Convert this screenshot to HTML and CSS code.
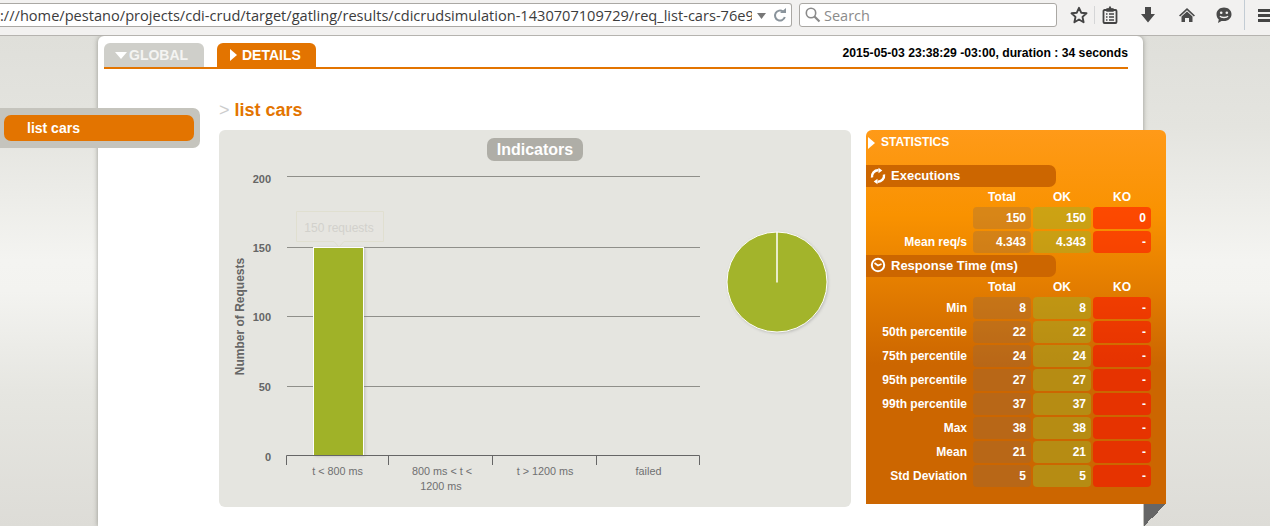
FILE: index.html
```html
<!DOCTYPE html>
<html lang="en">
<head>
<meta charset="utf-8">
<title>Gatling report - list cars</title>
<link rel="stylesheet" href="styles.css">
</head>
<body>
<header class="toolbar">
  <div class="urlbar">
    <span class="url">:///home/pestano/projects/cdi-crud/target/gatling/results/cdicrudsimulation-1430707109729/req_list-cars-76e9</span>
    <svg class="url-icons" width="32" height="16" viewBox="0 0 32 16"><path d="M1 6h9l-4.500 6z" fill="#777"/><path d="M27 4.500a5 5 0 1 0 1.800 5.500" fill="none" stroke="#8a949c" stroke-width="2"/><path d="M24 6h6V1z" fill="#8a949c"/></svg>
  </div>
  <div class="searchbar">
    <svg width="18" height="18" viewBox="0 0 18 18"><circle cx="7" cy="7" r="4.700" fill="none" stroke="#8a8a8a" stroke-width="1.600"/><path d="M10.500 10.500l5 5" stroke="#8a8a8a" stroke-width="2.200"/></svg>
    <span>Search</span>
  </div>
  <div class="tools">
    <svg class="t-star" width="18" height="18" viewBox="0 0 18 18"><path d="M9 1.800l2.200 4.900 5.300.6-4 3.600 1.100 5.300L9 13.500l-4.600 2.700 1.100-5.300-4-3.600 5.300-.6z" fill="none" stroke="#444" stroke-width="1.900" stroke-linejoin="round"/></svg>
    <i class="t-sep"></i>
    <svg class="t-clip" width="16" height="18" viewBox="0 0 16 18"><path d="M2.500 4h11a1 1 0 0 1 1 1v11a1 1 0 0 1-1 1h-11a1 1 0 0 1-1-1V5a1 1 0 0 1 1-1z" fill="none" stroke="#444" stroke-width="1.800"/><path d="M5 4V2.800h2L8 1l1 1.800h2V5H5zM4 8h1.500M7 8h5M4 11h1.500M7 11h5M4 14h1.500M7 14h5" fill="#444" stroke="#444" stroke-width="1.300"/></svg>
    <svg class="t-down" width="16" height="18" viewBox="0 0 16 18"><path d="M5 1h6v7h4l-7 8.500L1 8h4z" fill="#4a4a4a"/></svg>
    <svg class="t-home" width="18" height="18" viewBox="0 0 18 18"><path d="M9 2L1 9.500l1.200 1L9 4.300l6.800 6.200 1.200-1z" fill="#4a4a4a"/><path d="M9 5.500L3.500 10.500V16H7v-4h4v4h3.500v-5.500z" fill="#4a4a4a"/></svg>
    <svg class="t-chat" width="18" height="18" viewBox="0 0 18 18"><path d="M9 1.500c4.300 0 7.500 2.900 7.500 6.700S13.300 15 9 15H6.500L3 17l.8-3.400C2.300 12.300 1.500 10.400 1.500 8.200 1.500 4.400 4.700 1.500 9 1.500z" fill="#4a4a4a"/><circle cx="6.200" cy="6.700" r="1.300" fill="#f2f1f0"/><circle cx="11.800" cy="6.700" r="1.300" fill="#f2f1f0"/><path d="M5 10c1 2 7 2 8 0" fill="none" stroke="#f2f1f0" stroke-width="1.300"/></svg>
    <i class="t-sep t-sep-tall"></i>
    <div class="t-menu"><b></b><b></b><b></b></div>
  </div>
</header>

<div class="page">
  <nav class="sidebar"><a class="side-item">list cars</a></nav>
  <main class="sheet">
    <div class="tabbar">
      <a class="tab tab-global"><i class="arrow-down"></i>GLOBAL</a>
      <a class="tab tab-details"><i class="arrow-right"></i>DETAILS</a>
      <span class="runinfo">2015-05-03 23:38:29 -03:00, duration : 34 seconds</span>
    </div>
    <h1 class="title"><span class="title-gt">&gt;</span> list cars</h1>
    <div class="content">
      <section class="chart-panel">
        <h2 class="chart-title">Indicators</h2>
        <svg class="chart" width="632" height="377" viewBox="0 0 632 377">
          <defs>
            <filter id="soft" x="-20%" y="-20%" width="140%" height="140%"><feGaussianBlur stdDeviation="1.500"/></filter>
          </defs>
          <g class="grid">
            <path d="M68 46.500H481M68 117.500H481M68 186.500H481M68 256.500H481"/>
          </g>
          <g class="ylabels">
            <text x="52" y="53">200</text>
            <text x="52" y="122">150</text>
            <text x="52" y="191">100</text>
            <text x="52" y="261">50</text>
            <text x="52" y="331">0</text>
          </g>
          <text class="ytitle" transform="translate(25 186.500) rotate(-90)">Number of Requests</text>
          <rect x="96" y="118" width="50" height="208" fill="#888" opacity=".45" filter="url(#soft)"/>
          <rect x="94.500" y="117.500" width="50" height="208" fill="#a0b228" stroke="#fff"/>
          <path class="axis" d="M67.500 335V325.500H480.500V335M169.500 326V335M273.500 326V335M377.500 326V335"/>
          <g class="xlabels">
            <text x="118.500" y="345">t &lt; 800 ms</text>
            <text x="223" y="345">800 ms &lt; t &lt;</text>
            <text x="222" y="360">1200 ms</text>
            <text x="326" y="345">t &gt; 1200 ms</text>
            <text x="429.500" y="345">failed</text>
          </g>
          <g class="tooltip">
            <path d="M77.500 81.500H164.500V111.500H125L120 117 115 111.500H77.500z"/>
            <text x="120" y="102">150 requests</text>
          </g>
          <circle cx="559" cy="153" r="50" fill="#888" opacity=".5" filter="url(#soft)"/>
          <circle cx="558" cy="152" r="50" fill="#a3b42b" stroke="#fff"/>
          <path d="M558 102V152.500" stroke="#fff" stroke-width="1.500"/>
        </svg>
      </section>

      <section class="stats">
        <h2 class="stats-title"><i class="arrow-right arrow-stats"></i>STATISTICS</h2>
        <h3 class="stats-band">
          <svg width="18" height="18" viewBox="0 0 18 18"><path d="M3 10.500A6.200 6.200 0 0 1 9.500 3.300M15 7.500A6.200 6.200 0 0 1 8.500 14.700" fill="none" stroke="#fff" stroke-width="2.400"/><path d="M9.500 0.800l3.800 2.700-3.800 2.700zM8.500 17.200l-3.800-2.700 3.800-2.700z" fill="#fff"/></svg>
          Executions
        </h3>
        <div class="stats-grid">
          <span></span><span class="col">Total</span><span class="col">OK</span><span class="col">KO</span>
          <span></span><span class="c total">150</span><span class="c ok">150</span><span class="c ko">0</span>
          <span class="lbl">Mean req/s</span><span class="c total">4.343</span><span class="c ok">4.343</span><span class="c ko">-</span>
        </div>
        <h3 class="stats-band">
          <svg width="18" height="18" viewBox="0 0 18 18"><circle cx="9" cy="8" r="6.200" fill="none" stroke="#fff" stroke-width="2"/><path d="M5.500 6L9 8.500l3.500-1.500" fill="none" stroke="#fff" stroke-width="1.600"/></svg>
          Response Time (ms)
        </h3>
        <div class="stats-grid">
          <span></span><span class="col">Total</span><span class="col">OK</span><span class="col">KO</span>
          <span class="lbl">Min</span><span class="c total">8</span><span class="c ok">8</span><span class="c ko">-</span>
          <span class="lbl">50th percentile</span><span class="c total">22</span><span class="c ok">22</span><span class="c ko">-</span>
          <span class="lbl">75th percentile</span><span class="c total">24</span><span class="c ok">24</span><span class="c ko">-</span>
          <span class="lbl">95th percentile</span><span class="c total">27</span><span class="c ok">27</span><span class="c ko">-</span>
          <span class="lbl">99th percentile</span><span class="c total">37</span><span class="c ok">37</span><span class="c ko">-</span>
          <span class="lbl">Max</span><span class="c total">38</span><span class="c ok">38</span><span class="c ko">-</span>
          <span class="lbl">Mean</span><span class="c total">21</span><span class="c ok">21</span><span class="c ko">-</span>
          <span class="lbl">Std Deviation</span><span class="c total">5</span><span class="c ok">5</span><span class="c ko">-</span>
        </div>
        <i class="fold"></i>
      </section>
    </div>
  </main>
</div>
</body>
</html>
```
FILE: styles.css
```css
* { box-sizing: border-box; }
html, body { margin: 0; height: 526px; overflow: hidden; }
body { font-family: "Liberation Sans", Arial, sans-serif; background: #e4e4e0; }

/* Browser chrome */
.toolbar { position: relative; z-index: 2; height: 36px; display: flex; align-items: flex-start; padding-top: 3px; background: #f2f1f0; border-bottom: 1px solid #b5b3af; }
.urlbar { flex: none; width: 792px; height: 24px; display: flex; align-items: center; background: #fff; border: 1px solid #aaa8a4; border-left: 0; border-radius: 0 3px 3px 0; overflow: hidden; }
.url { flex: 1; min-width: 0; white-space: nowrap; overflow: hidden; font: 14.600px "Open Sans", sans-serif; color: #3c3c3c; }
.url-icons { flex: none; margin: 0 3px 0 4px; }
.searchbar { flex: none; width: 258px; height: 24px; margin-left: 7px; display: flex; align-items: center; gap: 2px; padding-left: 4px; background: #fff; border: 1px solid #aaa8a4; border-radius: 3px; font: 14.500px "Open Sans", sans-serif; color: #8b8b8b; }
.tools { flex: 1; display: flex; align-items: center; height: 24px; padding-left: 13px; }
.t-star { flex: none; margin-right: 6px; }
.t-sep { flex: none; width: 1px; height: 18px; background: #d5d6d7; }
.t-clip { flex: none; margin-left: 7px; }
.t-down { flex: none; margin-left: 22px; }
.t-home { flex: none; margin-left: 22px; }
.t-chat { flex: none; margin-left: 19px; }
.t-sep-tall { height: 30px; margin-left: 11px; background: #c3ccd4; }
.t-menu { flex: 1; margin-left: 13px; display: flex; flex-direction: column; gap: 2px; }
.t-menu b { display: block; height: 3px; background: #444; }

/* Page */
.page { position: relative; height: 490px; padding-left: 98px; background: linear-gradient(#dfdfda 0, #e4e4df 90px, #f4f4f1 225px, #f3f3f0 255px, #e6e6e1 355px, #dddcd7 490px); }
.sheet { width: 1045px; height: 490px; padding: 7px 15px 0 6px; background: #fff; border-radius: 6px 6px 0 0; box-shadow: 0 0 5px rgba(90,90,80,.55); }

.tabbar { display: flex; align-items: flex-start; height: 26px; border-bottom: 2px solid #e37400; }
.tab { display: flex; align-items: center; height: 24px; border-radius: 6px 6px 0 0; color: #fff; font-size: 14px; font-weight: bold; }
.tab-global { width: 100px; padding-left: 11px; background: #cfcfca; color: #f4f4f2; }
.tab-details { width: 99px; margin-left: 13px; padding-left: 13px; background: #e37400; }
.arrow-down { width: 0; height: 0; margin-right: 2px; border: 6px solid transparent; border-top: 7px solid #fff; border-bottom: 0; }
.arrow-right { width: 0; height: 0; margin-right: 5px; border: 6px solid transparent; border-left: 7px solid #fff; border-right: 0; }
.runinfo { margin-left: auto; font-size: 12.180px; font-weight: bold; color: #000; line-height: 20px; }

.title { margin: 31px 0 0 115px; height: 20px; font-size: 18px; line-height: 20px; font-weight: bold; color: #e37400; }
.title-gt { color: #ccc; font-weight: normal; }

.content { display: flex; gap: 15px; margin: 10px 0 0 115px; }
.chart-panel { position: relative; flex: none; width: 632px; height: 377px; background: #e5e5e0; border-radius: 6px; }
.chart-title { position: absolute; left: 268px; top: 8px; margin: 0; width: 96px; height: 23px; border-radius: 7px; background: #afaea7; color: #fff; font-size: 16px; line-height: 23px; text-align: center; }
.chart { display: block; }
.chart text { font-family: "Liberation Sans", Arial, sans-serif; }
.grid path { stroke: #8f8f8a; fill: none; }
.ylabels text { font-size: 11px; font-weight: bold; fill: #666; text-anchor: end; }
.ytitle { font-size: 12px; font-weight: bold; fill: #666; text-anchor: middle; }
.axis { fill: none; stroke: #666; }
.xlabels text { font-size: 10.800px; fill: #6f6f70; text-anchor: middle; }
.tooltip path { fill: #e6e5e0; stroke: #e0dfd0; }
.tooltip text { font-size: 12px; fill: #d2d1cc; text-anchor: middle; }

/* Statistics */
.stats { position: relative; flex: none; width: 300px; height: 374px; border-radius: 6px 6px 0 0; padding-top: 5px; color: #fff; background: linear-gradient(#ff9a18 0, #f99200 85px, #cc6600 235px); }
.stats-title { display: flex; align-items: center; height: 15px; margin: 0 0 15px 2px; font-size: 12px; line-height: 15px; }
.arrow-stats { margin-right: 6px; }
.stats-band { display: flex; align-items: center; gap: 4px; height: 22px; width: 190px; margin: 0; padding-left: 3px; border-radius: 0 7px 7px 0; background: #cc6600; font-size: 13px; line-height: 22px; }
.stats-grid { display: grid; grid-template-columns: 100px 58px 58px 58px; grid-template-rows: 18px; grid-auto-rows: 22px; gap: 2px; margin: 0 0 2px 5px; font-size: 12px; font-weight: bold; }
.col { text-align: center; line-height: 20px; height: 18px; }
.lbl { text-align: right; line-height: 22px; padding-right: 4px; white-space: nowrap; }
.c { text-align: right; line-height: 22px; padding-right: 5px; border-radius: 4px; }
.total { background: rgba(140,106,77,.3); }
.ok { background: rgba(160,178,38,.5); }
.ko { background: rgba(255,0,0,.5); }
.fold { position: absolute; right: 0; bottom: -22px; width: 22px; height: 22px; background: linear-gradient(135deg, #666 50%, transparent 50%); }

/* Side menu */
.sidebar { position: absolute; left: 0; top: 72px; width: 200px; height: 40px; padding: 7px 6px 7px 4px; background: #c5c4bd; border-radius: 0 7px 7px 0; }
.side-item { display: block; height: 26px; padding-left: 23px; border-radius: 7px; background: #e37400; color: #fff; font-size: 14px; font-weight: bold; line-height: 26px; }
```
